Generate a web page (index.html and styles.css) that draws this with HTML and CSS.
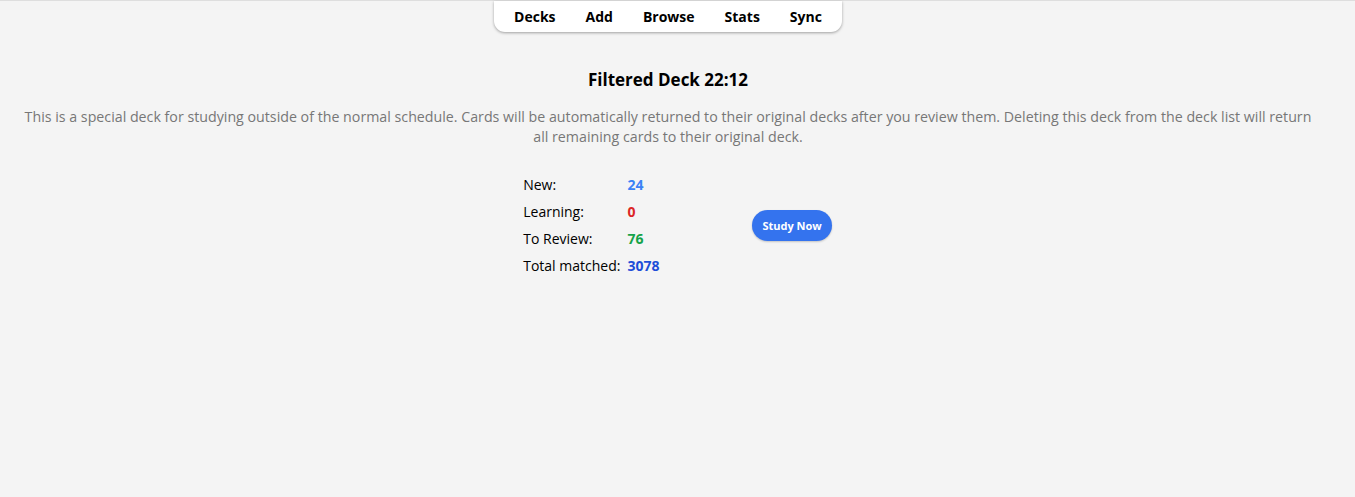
FILE: index.html
```html
<!DOCTYPE html>
<html>
<head>
<meta charset="utf-8">
<link rel="stylesheet" href="styles.css">
</head>
<body>
<div class="topline"></div>
<div class="page">
  <nav class="toolbar-wrap">
    <div class="toolbar">
      <span class="tb-item">Decks</span>
      <span class="tb-item">Add</span>
      <span class="tb-item">Browse</span>
      <span class="tb-item">Stats</span>
      <span class="tb-item">Sync</span>
    </div>
  </nav>
  <main class="overview">
    <h3 class="title">Filtered Deck 22:12</h3>
    <p class="desc">This is a special deck for studying outside of the normal schedule. Cards will be automatically returned to their original decks after you review them. Deleting this deck from the deck list will return all remaining cards to their original deck.</p>
    <div class="study-row">
      <table class="stats">
        <tr><td class="label">New:</td><td class="num new">24</td></tr>
        <tr><td class="label">Learning:</td><td class="num learn">0</td></tr>
        <tr><td class="label">To Review:</td><td class="num review">76</td></tr>
        <tr><td class="label">Total matched:</td><td class="num total">3078</td></tr>
      </table>
      <button class="study-btn">Study Now</button>
    </div>
  </main>
</div>
</body>
</html>
```
FILE: styles.css
```css
html, body {
  margin: 0;
  padding: 0;
  background: #f4f4f4;
  font-family: "Open Sans", "Noto Sans", sans-serif;
  color: #000;
}
.topline {
  height: 1px;
  background: #dedede;
}
.page {
  padding-right: 19px;
}
.toolbar-wrap {
  display: flex;
  justify-content: center;
}
.toolbar {
  display: flex;
  background: #fff;
  border-radius: 0 0 11px 11px;
  box-shadow: 0 1px 3px rgba(0,0,0,0.35);
  padding: 0 5px;
  height: 31px;
  align-items: center;
}
.tb-item {
  font-size: 14px;
  font-weight: 700;
  padding: 0 15px;
}
.overview {
  display: flex;
  flex-direction: column;
  align-items: center;
}
.title {
  margin: 37px 0 0;
  font-size: 17px;
  font-weight: 700;
  line-height: 22px;
}
.desc {
  margin: 16px 16px 0;
  font-size: 14.22px;
  line-height: 20px;
  color: #777;
  text-align: center;
}
.study-row {
  display: flex;
  align-items: center;
  gap: 93px;
  margin-top: 24px;
  margin-left: 19px;
}
.stats {
  border-collapse: collapse;
  font-size: 14px;
}
.stats td {
  padding: 0;
  height: 27px;
}
.label {
  padding-right: 7px !important;
}
.num { font-weight: 700; }
.new { color: #3b82f6; }
.learn { color: #dc2626; }
.review { color: #16a34a; }
.total { color: #1d4ed8; }
.study-btn {
  font-family: inherit;
  background: #3473ee;
  color: #fff;
  border: none;
  border-radius: 16px;
  height: 31px;
  padding: 0 10px;
  font-size: 11px;
  font-weight: 700;
  box-shadow: 0 1px 2px rgba(0,0,0,0.2);
}
```
